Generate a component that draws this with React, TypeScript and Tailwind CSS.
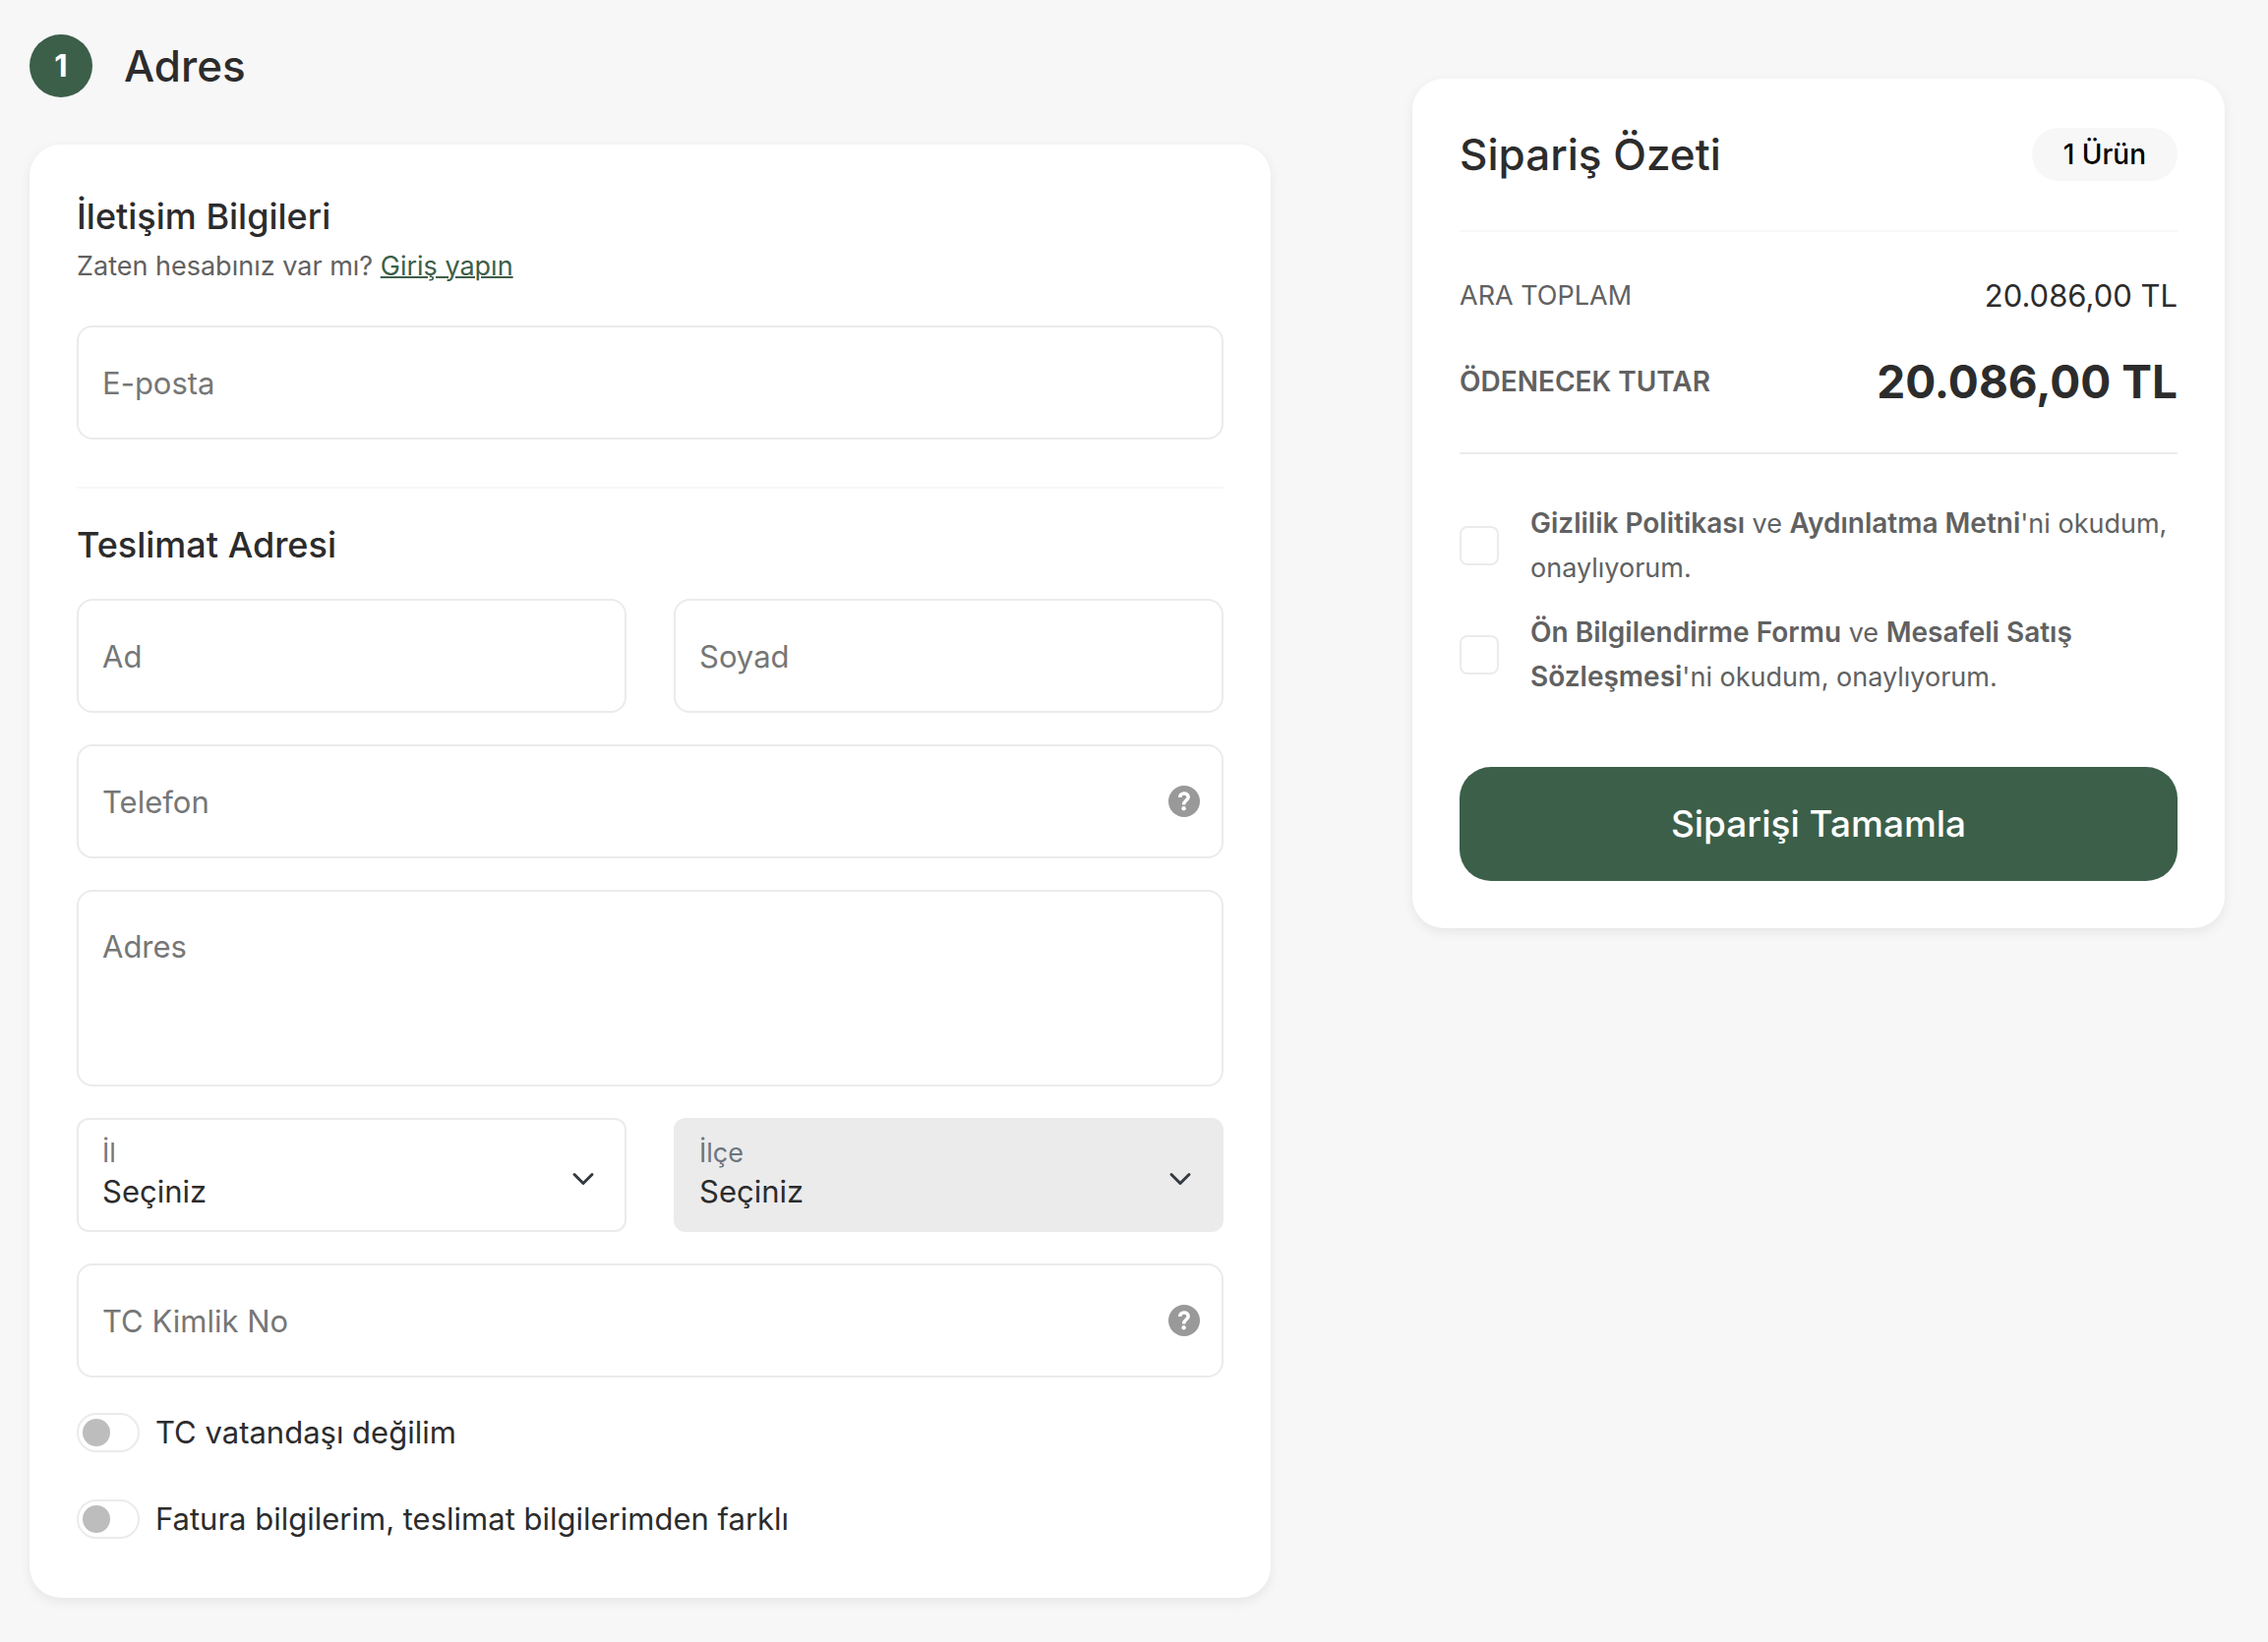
import type { ReactNode } from "react";

const fieldBox =
  "block w-full rounded-2xl border-2 border-[#ebebeb] bg-white px-6 text-[31px] leading-10 text-[#2c2c2c] outline-none placeholder:text-[#767676] placeholder:opacity-100 focus:border-[#3c5f49]";

function TextField({ label, type = "text", help = false }: { label: string; type?: string; help?: boolean }) {
  return (
    <div className="relative">
      <input type={type} aria-label={label} placeholder={label} className={`${fieldBox} h-[116px]`} />
      {help && (
        <button
          type="button"
          aria-label={`${label} hakkında yardım`}
          className="absolute inset-y-0 right-6 my-auto size-8"
        >
          <svg viewBox="0 0 32 32" className="size-8" aria-hidden="true">
            <circle cx="16" cy="16" r="16" fill="#999999" />
            <path
              d="M11.7 11.9C11.7 9.6 13.5 8 15.9 8C18.4 8 20.2 9.5 20.2 11.8C20.2 15 15.6 15.2 15.6 19.4"
              fill="none"
              stroke="#ffffff"
              strokeWidth="3.5"
            />
            <circle cx="15.6" cy="23.3" r="2.2" fill="#ffffff" />
          </svg>
        </button>
      )}
    </div>
  );
}

function SelectField({ id, label, disabled = false }: { id: string; label: string; disabled?: boolean }) {
  return (
    <div className="relative">
      <select
        id={id}
        disabled={disabled}
        className="block h-[116px] w-full appearance-none rounded-xl border-2 border-[#ebebeb] bg-white pt-[44px] pr-20 pb-[10px] pl-6 text-[31px] leading-10 text-[#2c2c2c] opacity-100 outline-none focus:border-[#3c5f49] disabled:bg-[#ebebeb]"
      >
        <option>Seçiniz</option>
      </select>
      <label
        htmlFor={id}
        className={`pointer-events-none absolute top-5 left-[26px] text-[27px] leading-8 ${
          disabled ? "text-[#6c757d]" : "text-[#767676]"
        }`}
      >
        {label}
      </label>
      <svg
        viewBox="0 0 16 16"
        className="pointer-events-none absolute inset-y-0 right-8 mt-[50px] size-6"
        fill="none"
        stroke="#343a40"
        strokeWidth="2"
        strokeLinecap="round"
        strokeLinejoin="round"
        aria-hidden="true"
      >
        <path d="m2 5 6 6 6-6" />
      </svg>
    </div>
  );
}

function Toggle({ children }: { children: ReactNode }) {
  return (
    <label className="flex items-center gap-4 text-[31px] leading-10">
      <input
        type="checkbox"
        role="switch"
        className="flex h-10 w-16 shrink-0 appearance-none items-center rounded-full border-2 border-[#ebebeb] bg-white px-1 before:size-7 before:rounded-full before:bg-[#bdbdbd] checked:justify-end checked:before:bg-[#3c5f49]"
      />
      <span>{children}</span>
    </label>
  );
}

function Consent({ children }: { children: ReactNode }) {
  return (
    <label className="flex items-center gap-8 text-[27px] leading-[45px] text-[#616161]">
      <input
        type="checkbox"
        className="size-10 shrink-0 appearance-none rounded-lg border-2 border-[#ebebeb] bg-white checked:bg-[#3c5f49]"
      />
      <span className="[&_strong]:text-[28px] [&_strong]:font-semibold">{children}</span>
    </label>
  );
}

export default function App() {
  return (
    <div className="flex min-h-screen items-start gap-36 bg-[#f7f7f7] pr-11 pb-10 pl-[30px] font-['Inter','Liberation_Sans',sans-serif] text-[#2c2c2c]">
      <main className="min-w-0 flex-1 pt-[35px]">
        <header className="flex items-center gap-8">
          <span className="flex size-16 items-center justify-center rounded-full bg-[#3c5f49] text-[31px] font-bold text-white">
            1
          </span>
          <h1 className="text-[44px] leading-[58px] font-medium">Adres</h1>
        </header>

        <form className="mt-12 rounded-[32px] bg-white px-12 pt-12 pb-[60px] shadow-[0_4px_12px_rgba(0,0,0,0.07)]">
          <section>
            <h2 className="text-[36px] leading-[50px] font-medium">İletişim Bilgileri</h2>
            <p className="mt-[6px] mb-10 text-[27px] leading-10 text-[#616161]">
              Zaten hesabınız var mı?{" "}
              <a href="#giris" className="text-[#3c5f49] underline decoration-2">
                Giriş yapın
              </a>
            </p>
            <TextField label="E-posta" type="email" />
          </section>

          <section className="mt-12 border-t-2 border-[#f7f7f7] pt-8">
            <h2 className="mb-[30px] text-[36px] leading-[50px] font-medium">Teslimat Adresi</h2>
            <div className="flex flex-col gap-8">
              <div className="grid grid-cols-2 gap-12">
                <TextField label="Ad" />
                <TextField label="Soyad" />
              </div>
              <TextField label="Telefon" type="tel" help />
              <textarea
                aria-label="Adres"
                placeholder="Adres"
                className={`${fieldBox} h-[200px] resize-none pt-9`}
              />
              <div className="grid grid-cols-2 gap-12">
                <SelectField id="il" label="İl" />
                <SelectField id="ilce" label="İlçe" disabled />
              </div>
              <TextField label="TC Kimlik No" help />
            </div>
            <div className="mt-9 flex flex-col gap-12">
              <Toggle>TC vatandaşı değilim</Toggle>
              <Toggle>Fatura bilgilerim, teslimat bilgilerimden farklı</Toggle>
            </div>
          </section>
        </form>
      </main>

      <aside className="mt-20 w-[826px] shrink-0 rounded-[32px] bg-white p-12 shadow-[0_4px_12px_rgba(0,0,0,0.07)]">
        <div className="flex items-center justify-between border-b-2 border-[#f7f7f7] pb-12">
          <h2 className="text-[44px] leading-[58px] font-medium">Sipariş Özeti</h2>
          <span className="rounded-full bg-[#f7f7f7] px-8 text-[28px] leading-[54px] font-medium text-black">
            1 Ürün
          </span>
        </div>

        <dl className="border-b-2 border-[#ebebeb] py-10">
          <div className="flex items-center justify-between leading-[50px]">
            <dt className="text-[27px] text-[#616161]">ARA TOPLAM</dt>
            <dd className="text-[31px]">20.086,00 TL</dd>
          </div>
          <div className="mt-[30px] flex items-center justify-between leading-[64px]">
            <dt className="text-[28px] font-semibold text-[#616161]">ÖDENECEK TUTAR</dt>
            <dd className="text-[46px] font-bold">20.086,00 TL</dd>
          </div>
        </dl>

        <div className="mt-12 flex flex-col gap-[21px]">
          <Consent>
            <strong>Gizlilik Politikası</strong> ve <strong>Aydınlatma Metni</strong>'ni okudum, onaylıyorum.
          </Consent>
          <Consent>
            <strong>Ön Bilgilendirme Formu</strong> ve <strong>Mesafeli Satış Sözleşmesi</strong>'ni okudum,
            onaylıyorum.
          </Consent>
        </div>

        <button
          type="button"
          className="mt-[69px] block h-[116px] w-full rounded-[32px] bg-[#3c5f49] text-[37px] font-medium text-white"
        >
          Siparişi Tamamla
        </button>
      </aside>
    </div>
  );
}
